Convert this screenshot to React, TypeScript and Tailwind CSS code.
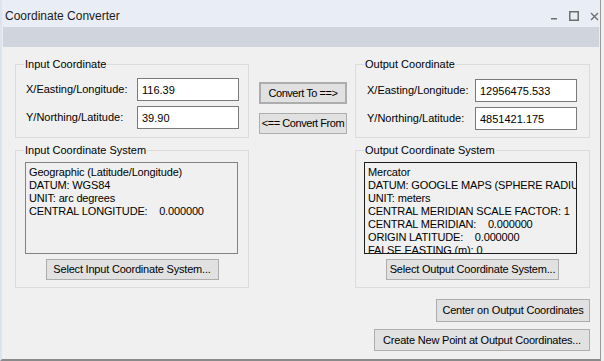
import React from 'react';

const font = "font-['Liberation_Sans',Arial,sans-serif]";

function WinButton({ children, className = '' }: { children: React.ReactNode; className?: string }) {
  return (
    <button
      className={`bg-[#e1e1e1] border border-[#adadad] text-[11px] leading-none text-black flex items-center justify-center whitespace-nowrap ${className}`}
    >
      {children}
    </button>
  );
}

function Group({ title, className = '', children }: { title: string; className?: string; children: React.ReactNode }) {
  return (
    <fieldset className={`border border-[#dcdcdc] flex flex-col ${className}`}>
      <legend className="ml-[8px] px-[1px] text-[11px] leading-[13px] text-black">{title}</legend>
      {children}
    </fieldset>
  );
}

function CoordRow({ label, value, labelPad, right }: { label: string; value: string; labelPad: string; right: string }) {
  return (
    <div className={`flex items-center ${labelPad} ${right}`}>
      <span className="text-[11px] text-black">{label}</span>
      <input
        readOnly
        value={value}
        className="ml-auto w-[102px] h-[23px] bg-white border border-[#7a7a7a] px-[4px] text-[11px] text-black outline-none"
      />
    </div>
  );
}

function InfoBox({ lines, dark }: { lines: string[]; dark?: boolean }) {
  return (
    <div
      className={`w-[213px] h-[92px] overflow-hidden border ${dark ? 'border-[#1e1e1e]' : 'border-[#828282]'} px-[3px] pt-[3px] text-[11px] leading-[13px] tracking-[-0.15px] text-black whitespace-pre`}
    >
      {lines.map((l, i) => (
        <div key={i}>{l}</div>
      ))}
    </div>
  );
}

export default function App() {
  const inputSys = [
    'Geographic (Latitude/Longitude)',
    'DATUM: WGS84',
    'UNIT: arc degrees',
    'CENTRAL LONGITUDE:    0.000000',
  ];
  // list box is scrolled/clipped: the 7th line only half shows
  const outputSys = [
    'Mercator',
    'DATUM: GOOGLE MAPS (SPHERE RADIUS: 6378137)',
    'UNIT: meters',
    'CENTRAL MERIDIAN SCALE FACTOR: 1',
    'CENTRAL MERIDIAN:    0.000000',
    'ORIGIN LATITUDE:    0.000000',
    'FALSE EASTING (m): 0',
  ];

  return (
    <div className={`w-[604px] h-[361px] bg-[#f0f0f0] ${font}`}>
      <div className="w-[601px] h-[361px] flex flex-col bg-[#e9edf5] border-l-2 border-[#dde4f0] border-r border-r-[#9a9a9a] border-b-2 border-b-[#8a8a8a]">
        {/* title bar */}
        <div className="h-[27px] flex items-start pt-[8px] pl-[3px] pr-[1px]">
          <span className="text-[12px] leading-[16px] text-[#1b1b1b]">Coordinate Converter</span>
          <div className="ml-auto flex items-center gap-[11px] pt-[3px]">
            <svg width="8" height="9" viewBox="0 0 8 9"><rect x="1" y="6" width="6" height="1.5" fill="#6e6e6e" /></svg>
            <svg width="10" height="10" viewBox="0 0 10 10"><rect x="0.75" y="0.75" width="8.5" height="8.5" fill="none" stroke="#6e6e6e" strokeWidth="1.5" /></svg>
            <svg width="9" height="9" viewBox="0 0 9 9"><path d="M1 1L8 8M8 1L1 8" stroke="#6e6e6e" strokeWidth="1.4" /></svg>
          </div>
        </div>
        <div className="h-[20px] mx-[1px] bg-[#cfd4dd]" />

        {/* content */}
        <div className="flex-1 bg-[#f0f0f0] pl-[13px] pt-[11px]">
          <div className="w-[575px] flex flex-col">
            <div className="flex">
              <Group title="Input Coordinate" className="w-[234px] h-[80px]">
                <div className="mt-[7px] flex flex-col gap-[5px]">
                  <CoordRow label="X/Easting/Longitude:" value="116.39" labelPad="pl-[10px]" right="pr-[9px]" />
                  <CoordRow label="Y/Northing/Latitude:" value="39.90" labelPad="pl-[10px]" right="pr-[9px]" />
                </div>
              </Group>
              <div className="w-[88px] ml-[10px] flex flex-col pt-[24px] gap-[9px]">
                <WinButton className="h-[22px] border-2 border-[#0078d7] tracking-[-0.45px]">Convert To ==&gt;</WinButton>
                <WinButton className="h-[21px] tracking-[-0.45px]">&lt;== Convert From</WinButton>
              </div>
              <Group title="Output Coordinate" className="w-[235px] h-[80px] ml-[8px]">
                <div className="mt-[8px] flex flex-col gap-[5px]">
                  <CoordRow label="X/Easting/Longitude:" value="12956475.533" labelPad="pl-[11px]" right="pr-[12px]" />
                  <CoordRow label="Y/Northing/Latitude:" value="4851421.175" labelPad="pl-[11px]" right="pr-[12px]" />
                </div>
              </Group>
            </div>

            <div className="flex mt-[6px]">
              <Group title="Input Coordinate System" className="w-[234px] h-[144px]">
                <div className="mt-[5px] ml-[9px]">
                  <InfoBox lines={inputSys} />
                </div>
                <WinButton className="mt-[5px] h-[21px] w-[173px] mx-auto tracking-[-0.2px]">Select Input Coordinate System...</WinButton>
              </Group>
              <Group title="Output Coordinate System" className="w-[235px] h-[144px] ml-[106px]">
                <div className="mt-[5px] ml-[8px]">
                  <InfoBox lines={outputSys} dark />
                </div>
                <WinButton className="mt-[5px] h-[21px] w-[173px] mx-auto tracking-[-0.2px]">Select Output Coordinate System...</WinButton>
              </Group>
            </div>

            <div className="flex flex-col items-end">
              <WinButton className="mt-[11px] h-[23px] w-[154px] tracking-[-0.2px]">Center on Output Coordinates</WinButton>
              <WinButton className="mt-[7px] h-[22px] w-[216px] tracking-[-0.2px]">Create New Point at Output Coordinates...</WinButton>
            </div>
          </div>
        </div>
      </div>
    </div>
  );
}
